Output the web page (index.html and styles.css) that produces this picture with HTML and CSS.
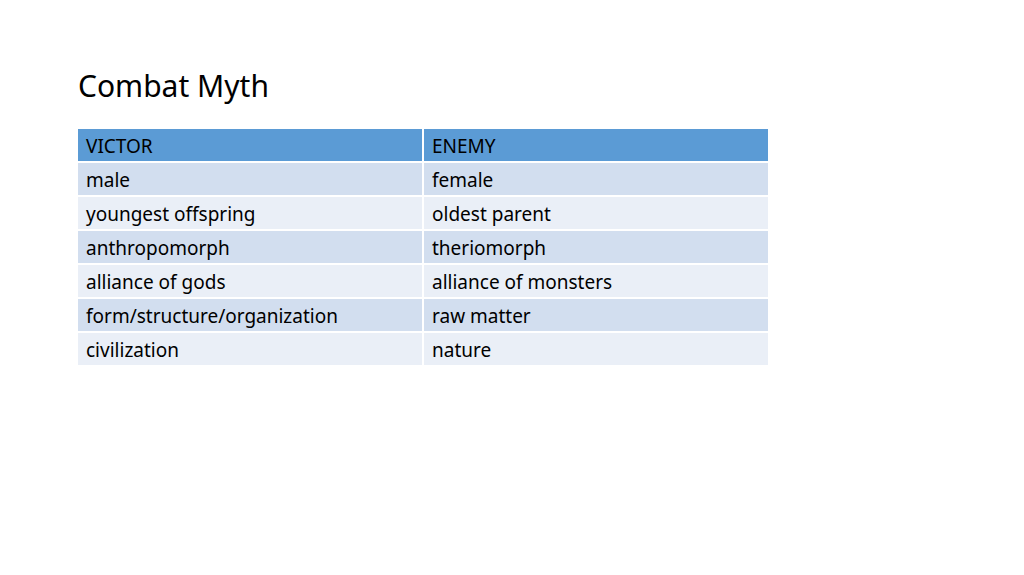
FILE: index.html
```html
<!DOCTYPE html>
<html>
<head>
<meta charset="utf-8">
<link rel="stylesheet" href="styles.css">
</head>
<body>
<div class="slide">
  <h1 class="title">Combat Myth</h1>
  <div class="table">
    <div class="cell head">VICTOR</div><div class="cell head">ENEMY</div>
    <div class="cell odd">male</div><div class="cell odd">female</div>
    <div class="cell even">youngest offspring</div><div class="cell even">oldest parent</div>
    <div class="cell odd">anthropomorph</div><div class="cell odd">theriomorph</div>
    <div class="cell even">alliance of gods</div><div class="cell even">alliance of monsters</div>
    <div class="cell odd">form/structure/organization</div><div class="cell odd">raw matter</div>
    <div class="cell even">civilization</div><div class="cell even">nature</div>
  </div>
</div>
</body>
</html>
```
FILE: styles.css
```css
html, body {
  margin: 0;
  padding: 0;
  background: #ffffff;
}
.slide {
  width: 1024px;
  height: 575px;
  padding: 66px 0 0 78px;
  box-sizing: border-box;
  font-family: "Noto Sans", "Open Sans", sans-serif;
  color: #000;
}
.title {
  margin: 0;
  font-size: 30px;
  font-weight: 400;
  line-height: 40px;
  height: 63px;
}
.table {
  display: grid;
  grid-template-columns: 344px 344px;
  gap: 2px;
  width: 690px;
  background: #ffffff;
}
.cell {
  height: 32px;
  line-height: 32px;
  padding: 1px 0 0 8px;
  box-sizing: border-box;
  font-size: 19px;
}
.head { background: #5b9bd5; }
.odd { background: #d2deef; }
.even { background: #eaeff7; }
```
